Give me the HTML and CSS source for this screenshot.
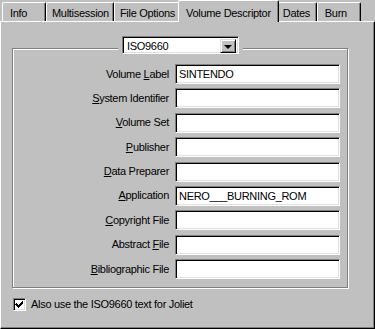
FILE: index.html
```html
<!DOCTYPE html>
<html lang="en">
<head>
  <meta charset="UTF-8" />
  <meta name="viewport" content="width=device-width, initial-scale=1" />
  <title>Volume Descriptor</title>
  <link rel="stylesheet" href="styles.css">
</head>
<body>
  <div class="dialog">
    <div class="tabs">
      <div class="tab tab-wide">Info</div>
      <div class="tab">Multisession</div>
      <div class="tab">File Options</div>
      <div class="tab active">Volume Descriptor</div>
      <div class="tab">Dates</div>
      <div class="tab tab-wide">Burn</div>
    </div>

    <div class="panel">
      <fieldset class="group">
        <legend class="group-legend">
          <div class="combo">
            <span class="combo-value">ISO9660</span>
            <span class="combo-btn"><span class="arrow"></span></span>
          </div>
        </legend>

        <div class="fields">
          <label class="field-label">Volume <u>L</u>abel</label>
          <input class="field" type="text" value="SINTENDO" />
          <label class="field-label"><u>S</u>ystem Identifier</label>
          <input class="field" type="text" value="" />
          <label class="field-label"><u>V</u>olume Set</label>
          <input class="field" type="text" value="" />
          <label class="field-label"><u>P</u>ublisher</label>
          <input class="field" type="text" value="" />
          <label class="field-label"><u>D</u>ata Preparer</label>
          <input class="field" type="text" value="" />
          <label class="field-label"><u>A</u>pplication</label>
          <input class="field" type="text" value="NERO___BURNING_ROM" />
          <label class="field-label"><u>C</u>opyright File</label>
          <input class="field" type="text" value="" />
          <label class="field-label">Abstract <u>F</u>ile</label>
          <input class="field" type="text" value="" />
          <label class="field-label"><u>B</u>ibliographic File</label>
          <input class="field" type="text" value="" />
        </div>
      </fieldset>

      <label class="check-row">
        <span class="check">
          <svg width="9" height="9" viewBox="0 0 9 9" shape-rendering="crispEdges">
            <path d="M1 3h1v1h1v1h1v-1h1v-1h1v-1h1v-1h1v3h-1v1h-1v1h-1v1h-1v1h-1v-1h-1v-1h-1v-1h-1z" fill="#000"/>
          </svg>
        </span>
        Also use the ISO9660 text for Joliet
      </label>
    </div>
  </div>
</body>
</html>
```

FILE: styles.css
```css
body {
  margin: 0;
  background: #c0c0c0;
  font-family: "Liberation Sans", Arial, sans-serif;
  font-size: 11px;
  letter-spacing: -0.3px;
  color: #000;
}

.dialog {
  width: 375px;
  height: 329px;
  background: #c0c0c0;
}

/* tab strip */
.tabs {
  display: flex;
  align-items: flex-end;
  height: 21px;
  padding-left: 2px;
}

.tab {
  min-width: 40px;
  height: 19px;
  box-sizing: border-box;
  padding: 4px 4px 0 5px;
  line-height: 13px;
  white-space: nowrap;
  border-top: 1px solid #fff;
  border-left: 1px solid #fff;
  border-right: 1px solid #000;
  border-radius: 2px 2px 0 0;
  box-shadow: inset -1px 0 0 #808080;
}

.tab-wide {
  min-width: 44px;
  padding-left: 7px;
}

.tab.active {
  height: 22px;
  margin: 0 -2px -1px;
  padding: 6px 7px 0 7px;
  background: #c0c0c0;
  position: relative;
  z-index: 1;
}

/* page body */
.panel {
  height: 308px;
  box-sizing: border-box;
  padding: 14px 0 0 11px;
  border-top: 1px solid #fff;
  border-left: 1px solid #fff;
  border-right: 1px solid #000;
  border-bottom: 1px solid #000;
  box-shadow: inset -1px -1px 0 #808080;
}

.group {
  width: 336px;
  box-sizing: border-box;
  margin: 0;
  padding: 4px 7px 8px 8px;
  border: 1px solid #808080;
  box-shadow: 1px 1px 0 #fff, inset 1px 1px 0 #fff;
  min-inline-size: 0;
}

.group-legend {
  margin: 0 auto;
  padding: 0 4px 6px;
  background: #c0c0c0;
}

.combo {
  display: flex;
  width: 117px;
  height: 18px;
  box-sizing: border-box;
  background: #fff;
  border: 1px solid;
  border-color: #808080 #fff #fff #808080;
  box-shadow: inset 1px 1px 0 #000, inset -1px -1px 0 #dfdfdf;
  padding: 2px;
}

.combo-value {
  flex: 1;
  padding-left: 2px;
  line-height: 14px;
}

.combo-btn {
  width: 16px;
  height: 14px;
  box-sizing: border-box;
  display: flex;
  align-items: center;
  justify-content: center;
  background: #c0c0c0;
  border: 1px solid;
  border-color: #dfdfdf #000 #000 #dfdfdf;
  box-shadow: inset 1px 1px 0 #fff, inset -1px -1px 0 #808080;
}

.arrow {
  width: 0;
  height: 0;
  border-left: 4px solid transparent;
  border-right: 4px solid transparent;
  border-top: 4px solid #000;
  margin-top: 1px;
}

.fields {
  display: grid;
  grid-template-columns: 1fr 165px;
  column-gap: 6px;
  row-gap: 4.375px;
  align-items: center;
}

.field-label {
  justify-self: end;
  white-space: nowrap;
  line-height: 13px;
}

.field {
  width: 165px;
  height: 20px;
  box-sizing: border-box;
  margin: 0;
  padding: 0 2px 0 3px;
  font: inherit;
  letter-spacing: inherit;
  color: #000;
  background: #fff;
  border: 1px solid;
  border-color: #808080 #fff #fff #808080;
  box-shadow: inset 1px 1px 0 #000, inset -1px -1px 0 #dfdfdf;
  outline: none;
}

.check-row {
  display: flex;
  align-items: center;
  gap: 5px;
  margin-top: 10px;
  margin-left: 1px;
  line-height: 13px;
}

.check {
  width: 13px;
  height: 13px;
  box-sizing: border-box;
  display: flex;
  align-items: center;
  justify-content: center;
  background: #fff;
  border: 1px solid;
  border-color: #808080 #fff #fff #808080;
  box-shadow: inset 1px 1px 0 #000, inset -1px -1px 0 #dfdfdf;
}
```
